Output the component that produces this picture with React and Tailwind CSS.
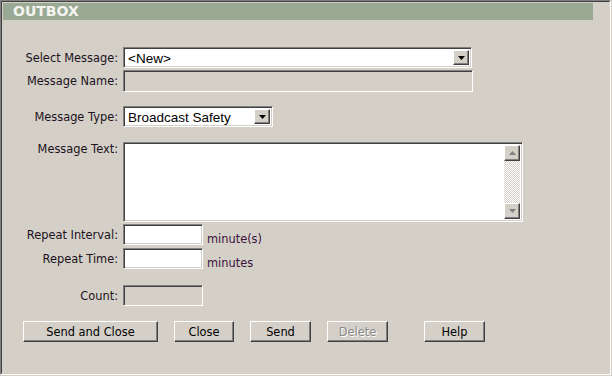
const sunken =
  "border border-t-[#808080] border-l-[#808080] border-r-white border-b-white shadow-[inset_1px_1px_0_#404040,inset_-1px_-1px_0_#d4d0c8]";
const raised =
  "border border-t-white border-l-white border-r-[#404040] border-b-[#404040] shadow-[inset_-1px_-1px_0_#808080,inset_1px_1px_0_#d4d0c8]";

function Arrow({ up, color = "#000" }) {
  return (
    <svg width="7" height="4" viewBox="0 0 7 4">
      {up ? (
        <path d="M3.5 0 L7 4 L0 4 Z" fill={color} />
      ) : (
        <path d="M0 0 L7 0 L3.5 4 Z" fill={color} />
      )}
    </svg>
  );
}

function DropButton() {
  return (
    <div className={`${raised} w-[16px] h-full flex items-center justify-center bg-[#d4d0c8]`}>
      <Arrow />
    </div>
  );
}

function Select({ width, value }) {
  return (
    <div className={`${sunken} ${width} h-[21px] bg-white flex p-[2px]`}>
      <div className="flex-1 pl-[2px] text-[13.5px] leading-[17px] text-black font-['Liberation_Sans',Arial,sans-serif]">
        {value}
      </div>
      <DropButton />
    </div>
  );
}

function Label({ children, className = "pt-[2px]" }) {
  return (
    <div className={`w-[116px] shrink-0 text-right text-[11.4px] text-[#1c121c] ${className}`}>
      {children}
    </div>
  );
}

function Btn({ children, width, disabled }) {
  return (
    <div
      className={`${raised} ${width} h-[21px] flex items-center justify-center pt-[2px] bg-[#d4d0c8] text-[11.4px] ${
        disabled ? "text-[#8a8a8a] [text-shadow:1px_1px_0_#fff]" : "text-black"
      }`}
    >
      {children}
    </div>
  );
}

export default function App() {
  return (
    <div className="w-[612px] h-[376px] bg-[#d4d0c8] font-['DejaVu_Sans',Verdana,sans-serif]">
      <div className="w-[611px] h-[375px] border border-t-[#808080] border-l-[#808080] border-r-white border-b-white">
        <div className="h-full border border-t-[#404040] border-l-[#404040] border-r-[#d4d0c8] border-b-[#d4d0c8]">
          <div className="ml-px mt-px w-[590px] h-[17px] bg-[#99a993] pl-[10px] text-[14px] leading-[17px] font-bold text-[#f4f4f0]">
            OUTBOX
          </div>

          <div className="flex flex-col">
            <div className="mt-[27px] flex items-center gap-[5px]">
              <Label>Select Message:</Label>
              <Select width="w-[349px]" value="<New>" />
            </div>

            <div className="mt-[2px] flex items-center gap-[5px]">
              <Label>Message Name:</Label>
              <div className={`${sunken} w-[350px] h-[22px] bg-[#d4d0c8]`} />
            </div>

            <div className="mt-[14px] flex items-center gap-[5px]">
              <Label>Message Type:</Label>
              <Select width="w-[150px]" value="Broadcast Safety" />
            </div>

            <div className="mt-[15px] flex items-start gap-[5px]">
              <Label className="-mt-[1px]">Message Text:</Label>
              <div className={`${sunken} w-[400px] h-[80px] bg-white flex justify-end p-[2px]`}>
                <div className="w-[16px] h-full flex flex-col">
                  <div className={`${raised} h-[16px] flex items-center justify-center bg-[#d4d0c8]`}>
                    <Arrow up color="#808080" />
                  </div>
                  <div className="flex-1 bg-[repeating-conic-gradient(#ffffff_0_25%,#d4d0c8_0_50%)] bg-[length:2px_2px]" />
                  <div className={`${raised} h-[16px] flex items-center justify-center bg-[#d4d0c8]`}>
                    <Arrow color="#808080" />
                  </div>
                </div>
              </div>
            </div>

            <div className="mt-[2px] flex items-center gap-[5px]">
              <Label>Repeat Interval:</Label>
              <div className={`${sunken} w-[80px] h-[21px] bg-white`} />
              <span className="self-end -mb-[3px] ml-[-1px] text-[11.4px] text-[#3a123a]">minute(s)</span>
            </div>

            <div className="mt-[3px] flex items-center gap-[5px]">
              <Label>Repeat Time:</Label>
              <div className={`${sunken} w-[80px] h-[21px] bg-white`} />
              <span className="self-end -mb-[3px] ml-[-1px] text-[11.4px] text-[#3a123a]">minutes</span>
            </div>

            <div className="mt-[16px] flex items-center gap-[5px]">
              <Label>Count:</Label>
              <div className={`${sunken} w-[80px] h-[21px] bg-[#d4d0c8]`} />
            </div>

            <div className="mt-[15px] ml-[21px] flex items-center">
              <Btn width="w-[135px]">Send and Close</Btn>
              <div className="ml-[16px]">
                <Btn width="w-[60px]">Close</Btn>
              </div>
              <div className="ml-[16px]">
                <Btn width="w-[61px]">Send</Btn>
              </div>
              <div className="ml-[16px]">
                <Btn width="w-[61px]" disabled>
                  Delete
                </Btn>
              </div>
              <div className="ml-[36px]">
                <Btn width="w-[61px]">Help</Btn>
              </div>
            </div>
          </div>
        </div>
      </div>
    </div>
  );
}
